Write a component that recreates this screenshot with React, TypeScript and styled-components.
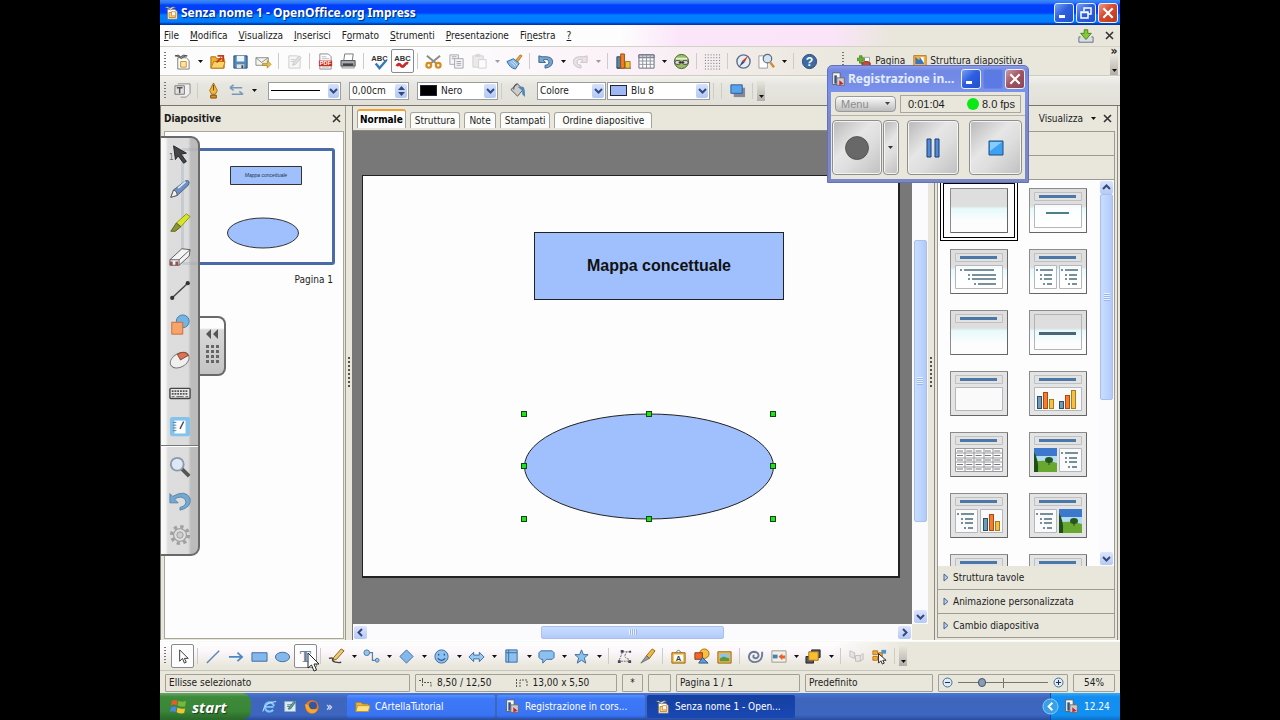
import React from "react";
import styled, { createGlobalStyle, css } from "styled-components";

const ui = `"DejaVu Sans Condensed", "DejaVu Sans", sans-serif`;
const beige = "#e9e7dc";

const Global = createGlobalStyle`
  *, *::before, *::after { box-sizing: border-box; }
  body { margin: 0; background: #000; }
  button, select, input { font: inherit; color: inherit; margin: 0; padding: 0; border: 0; background: none; border-radius: 0; }
  button { cursor: default; }
  svg { display: block; flex: none; }
`;

const Screen = styled.main`
  position: relative;
  width: 75%;
  height: 100vh;
  min-height: 600px;
  margin: 0 auto;
  display: flex;
  flex-direction: column;
  overflow: hidden;
  background: ${beige};
  color: #1c1c1c;
  font: 10px/14px ${ui};
  white-space: nowrap;
`;

/* ---------- title and menu ---------- */
const TitleBar = styled.header`
  height: 25px;
  flex: none;
  display: flex;
  align-items: center;
  padding: 0 2px 0 4px;
  gap: 2px;
  background: linear-gradient(#3c88f8 0, #2a72f6 3px, #0040fa 5px, #0040fa 13px, #0080ff 15px, #007cff 22px, #0038b0 24px);
`;
const Title = styled.h1`
  flex: 1;
  margin: 0;
  color: #fff;
  font: bold 12px/16px "Noto Sans", sans-serif;
  text-shadow: 1px 1px 1px #00207c;
`;
const WindowButton = styled.button<{ $tone?: "red" | "pale" | "dim" }>`
  width: 20px;
  height: 20px;
  display: grid;
  place-items: center;
  border: 1px solid ${(p) => (p.$tone === "dim" ? "#6a86e8" : "#e8f0ff")};
  border-radius: 3px;
  background: ${(p) =>
    p.$tone === "red"
      ? "linear-gradient(135deg, #ec9a84, #d8492c 45%, #b83a1c)"
      : p.$tone === "pale"
      ? "linear-gradient(135deg, #c89aa8, #a0525c 50%, #8c4658)"
      : p.$tone === "dim"
      ? "#5c7ae4"
      : "linear-gradient(135deg, #7aa0f4, #2e5fe0 45%, #2050cc)"};
`;
const MenuBar = styled.nav`
  height: 22px;
  flex: none;
  display: flex;
  align-items: center;
  gap: 11px;
  padding: 0 6px 0 4px;
  border-bottom: 1px solid #d4d2c8;
  background: linear-gradient(90deg, #fdfdfd 48%, #fbe6f9 54%, #fbe4f9 70%, ${beige} 76%);
`;
const MenuItem = styled.button`
  u { text-underline-offset: 1px; }
`;
const Spacer = styled.span`
  flex: 1;
`;

/* ---------- toolbars ---------- */
const Toolbar = styled.div<{ $kind: "main" | "line" | "draw" }>`
  display: flex;
  align-items: center;
  flex: none;
  padding-left: 4px;
  ${(p) =>
    p.$kind === "main" &&
    css`
      height: 29px;
      border-bottom: 1px solid #d0cec4;
      background: linear-gradient(90deg, #fcfcfc 30%, #fbf0f8 50%, #f0ebe6 62%, ${beige} 74%);
    `}
  ${(p) =>
    p.$kind === "line" &&
    css`
      height: 30px;
      border-bottom: 1px solid #77756e;
      background: linear-gradient(#f2f1ec 0, #e6e5df 9px, #e2e0d8 100%);
    `}
  ${(p) =>
    p.$kind === "draw" &&
    css`
      height: 30px;
      border-top: 1px solid #f8f8f4;
      border-bottom: 1px solid #c8c6bc;
      background: linear-gradient(90deg, transparent 70%, ${beige} 78%), linear-gradient(#fff 0, #fbf6fa 10px, ${beige} 24px);
    `}
`;
const Grip = styled.span`
  width: 2px;
  height: 18px;
  margin-right: 5px;
  background: repeating-linear-gradient(#77756c 0 1px, transparent 1px 3px);
`;
const Tool = styled.button<{ $on?: boolean }>`
  width: 23px;
  height: 24px;
  flex: none;
  display: grid;
  place-items: center;
  border: 1px solid ${(p) => (p.$on ? "#8a8a92" : "transparent")};
  border-radius: 2px;
  background: ${(p) => (p.$on ? "#fdfdfd" : "none")};
`;
const Drop = styled.button<{ $faded?: boolean }>`
  width: 12px;
  height: 20px;
  flex: none;
  display: grid;
  place-items: center;
  opacity: ${(p) => (p.$faded ? 0.4 : 1)};
`;
const Rule = styled.i`
  width: 1px;
  height: 16px;
  margin: 0 4px 0 3px;
  background: #cfccc8;
`;
const More = styled.button`
  width: 8px;
  height: 20px;
  display: grid;
  place-items: end center;
  padding-bottom: 3px;
  background: linear-gradient(${beige}, #b0aea8);
`;
const NamedTool = styled.button`
  display: flex;
  align-items: center;
  gap: 3px;
  margin-left: 8px;
`;
const ToolEnd = styled.span`
  display: flex;
  flex-direction: column;
  align-items: center;
  width: 12px;
  font-size: 12px;
  line-height: 8px;
  font-weight: bold;
`;
const Field = styled.label<{ $w: number; $gap?: number }>`
  width: ${(p) => p.$w}px;
  height: 18px;
  flex: none;
  display: flex;
  align-items: center;
  gap: 4px;
  padding: 0 1px 0 2px;
  margin-left: ${(p) => p.$gap ?? 8}px;
  border: 1px solid #9a9c9e;
  background: #fff;
  select, input { flex: 1; min-width: 0; width: 20px; height: 14px; line-height: 14px; appearance: none; outline: 0; }
`;
const FieldArrow = styled.span`
  width: 12px;
  height: 14px;
  display: grid;
  place-items: center;
  border-radius: 2px;
  background: linear-gradient(#d6e2fc, #b2c8f4);
`;
const Swatch = styled.span<{ $c: string }>`
  width: 17px;
  height: 11px;
  border: 1px solid #223;
  background: ${(p) => p.$c};
`;
const LineSample = styled.span`
  width: 53px;
  height: 1px;
  background: #000;
`;

/* ---------- workspace ---------- */
const Work = styled.div`
  flex: 1;
  min-height: 0;
  display: flex;
  border-bottom: 1px solid #fff;
`;
const SlidesPane = styled.aside`
  width: 186px;
  flex: none;
  display: flex;
  flex-direction: column;
  padding: 0 1px 1px 3px;
  border-left: 1px solid #777;
  border-right: 1px solid #9c9a90;
`;
const PaneHead = styled.div`
  height: 25px;
  flex: none;
  display: flex;
  align-items: center;
  gap: 4px;
  padding: 0 3px 0 0;
  h2 { flex: 1; margin: 0; font: bold 10px/14px ${ui}; }
`;
const SlideList = styled.div`
  flex: 1;
  padding: 16px 8px 0 6px;
  border: 1px solid #a9a79c;
  background: #fdfdfd;
`;
const ThumbRow = styled.div`
  display: flex;
  justify-content: space-between;
  align-items: flex-start;
`;
const Thumb = styled.div`
  width: 154px;
  height: 117px;
  border: 3px solid #4a6aa8;
  border-radius: 3px;
  background: #fdfdfd;
`;
const ThumbName = styled.p`
  margin: 8px 2px 0;
  text-align: right;
`;
const Splitter = styled.div`
  width: 6px;
  flex: none;
  display: grid;
  place-items: center;
  span { width: 2px; height: 31px; margin-bottom: 2px; background: repeating-linear-gradient(#55534c 0 2px, transparent 2px 4px); }
`;
const Editor = styled.section`
  flex: 1;
  min-width: 0;
  display: flex;
  flex-direction: column;
  border-left: 1px solid #777;
`;
const Tabs = styled.div`
  height: 25px;
  flex: none;
  display: flex;
  align-items: flex-end;
  gap: 4px;
  padding: 0 4px 2px;
  border-bottom: 1px solid #8c8a84;
`;
const Tab = styled.button<{ $active?: boolean }>`
  height: ${(p) => (p.$active ? 19 : 16)}px;
  padding: 0 ${(p) => (p.$active ? 2 : 4)}px;
  border: 1px solid #a4a29a;
  border-bottom: 0;
  border-top: ${(p) => (p.$active ? "2px solid #f4a030" : "1px solid #a4a29a")};
  border-radius: 3px 3px 0 0;
  background: #fcfcfa;
  font-weight: ${(p) => (p.$active ? "bold" : "normal")};
  color: ${(p) => (p.$active ? "#000" : "#1c1c1c")};
  &:last-child { padding: 0 7px; }
`;
const Stage = styled.div`
  flex: 1;
  min-height: 0;
  display: grid;
  grid-template: minmax(0, 1fr) 16px / minmax(0, 1fr) 16px;
`;
const Desk = styled.div`
  padding: 44px 12px 46px 9px;
  background: #787878;
`;
const Slide = styled.div`
  position: relative;
  height: 100%;
  border: 1px solid #222;
  border-width: 1px 2px 2px 1px;
  background: #fdfdfd;
`;
const Concept = styled.div`
  position: absolute;
  left: 171px;
  top: 56px;
  width: 250px;
  height: 68px;
  display: grid;
  place-items: center;
  border: 1px solid #222;
  background: #9fc0fd;
  color: #111;
  font: bold 16px/20px "Liberation Sans", sans-serif;
`;
const Oval = styled.svg`
  position: absolute;
  left: 157px;
  top: 234px;
`;
const Scroll = styled.div<{ $across?: boolean }>`
  display: flex;
  flex-direction: ${(p) => (p.$across ? "row" : "column")};
  align-items: center;
  background: #fbfbfd;
  padding: 1px;
`;
const ScrollButton = styled.button`
  width: 13px;
  height: 13px;
  flex: none;
  display: grid;
  place-items: center;
  border-radius: 2px;
  background: linear-gradient(#dbe5fd, #b6c9f4);
`;
const ScrollGap = styled.span<{ $n: number }>`
  flex: ${(p) => p.$n} 1 0;
`;
const ScrollThumb = styled.span<{ $n: number; $across?: boolean }>`
  flex: ${(p) => p.$n} 1 0;
  ${(p) => (p.$across ? "height" : "width")}: 13px;
  display: grid;
  place-items: center;
  border: 1px solid #a8c0ee;
  border-radius: 2px;
  background: linear-gradient(${(p) => (p.$across ? "180deg" : "90deg")}, #c8dcfe, #bbd4fd 60%, #b4c8f8);
  i {
    width: ${(p) => (p.$across ? 8 : 6)}px;
    height: ${(p) => (p.$across ? 6 : 8)}px;
    background: repeating-linear-gradient(${(p) => (p.$across ? "90deg" : "180deg")}, #e6f2ff 0 1px, #9ab8ee 1px 2px);
  }
`;

/* ---------- task pane ---------- */
const TaskPane = styled.aside`
  width: 184px;
  flex: none;
  display: flex;
  flex-direction: column;
  margin-right: 2px;
  padding: 0 2px 2px;
  border-left: 1px solid #8c8a82;
  border-right: 1px solid #8c8a82;
`;
const Sections = styled.div`
  flex: 1;
  min-height: 0;
  display: flex;
  flex-direction: column;
  border: 1px solid #9c9a92;
`;
const Section = styled.button`
  height: 24px;
  flex: none;
  display: flex;
  align-items: center;
  gap: 4px;
  padding-left: 5px;
  text-align: left;
  border-bottom: 1px solid #9c9a92;
  &:last-child { border-bottom: 0; height: 23px; }
`;
const LayoutArea = styled.div`
  flex: 1;
  min-height: 0;
  display: flex;
  background: #fdfdfd;
`;
const LayoutGrid = styled.div`
  flex: 1;
  height: 100%;
  overflow: hidden;
  display: grid;
  grid-template-columns: 79px 79px;
  grid-auto-rows: 61px;
  padding-left: 2px;
`;
const LayoutOption = styled.button<{ $on?: boolean }>`
  width: 78px;
  height: 61px;
  display: grid;
  place-items: center;
  border: ${(p) => (p.$on ? "4px double #000" : "4px solid transparent")};
`;

/* ---------- status bar ---------- */
const Status = styled.footer`
  height: 22px;
  flex: none;
  display: flex;
  align-items: center;
  gap: 5px;
  padding: 1px 5px 0;
`;
const Cell = styled.div<{ $w?: number; $center?: boolean }>`
  ${(p) => (p.$w ? `width: ${p.$w}px;` : "flex: 1;")}
  height: 18px;
  display: flex;
  align-items: center;
  justify-content: ${(p) => (p.$center ? "center" : "flex-start")};
  gap: 5px;
  padding: 0 3px;
  border: 1px solid #a2a096;
  border-radius: 1px;
`;
const Position = styled.span`
  display: flex;
  align-items: center;
  gap: 5px;
  margin-right: 18px;
`;
const Zoom = styled.input`
  appearance: none;
  flex: 1;
  min-width: 0;
  height: 10px;
  outline: 0;
  background: linear-gradient(#77756e, #77756e) center / 100% 1px no-repeat, linear-gradient(#77756e, #77756e) center / 1px 10px no-repeat !important;
  &::-webkit-slider-thumb { appearance: none; width: 8px; height: 9px; border-radius: 4px; border: 1px solid #44546c; background: #8a9cb4; }
`;

/* ---------- taskbar ---------- */
const Taskbar = styled.nav`
  height: 27px;
  flex: none;
  display: flex;
  align-items: stretch;
  color: #fff;
  background: linear-gradient(#4878dc 0, #3f66bc 5px, #3d66c0 22px, #2a4c9c 27px);
`;
const Start = styled.button`
  width: 91px;
  display: flex;
  align-items: center;
  gap: 5px;
  padding-left: 10px;
  border-radius: 0 9px 9px 0;
  background: linear-gradient(#6aa866 0, #3c8a3a 4px, #3a8638 18px, #2a6a2a 26px);
  font: italic bold 15px/18px "Open Sans", sans-serif;
  text-shadow: 1px 1px 1px #1c3c1c;
`;
const Quick = styled.div`
  width: 95px;
  display: flex;
  align-items: center;
  gap: 6px;
  padding-left: 11px;
  font-size: 12px;
`;
const Task = styled.button<{ $active?: boolean }>`
  width: 148px;
  height: 23px;
  margin: 2px 1px 0;
  display: flex;
  align-items: center;
  gap: 5px;
  padding-left: 8px;
  border-radius: 2px;
  background: ${(p) => (p.$active ? "linear-gradient(#1440a0, #1a48b4)" : "linear-gradient(#5a90ff 0, #3c78f8 4px, #3a74f2 20px, #2c60d4)")};
`;
const Tray = styled.div`
  width: 70px;
  display: flex;
  align-items: center;
  gap: 5px;
  background: linear-gradient(#38a8f8 0, #128ef0 4px, #1290f2 22px, #0c70c8);
  border-left: 1px solid #0c50a8;
  svg:first-child { margin-left: -9px; }
`;

/* ---------- floating recorder ---------- */
const Recorder = styled.section`
  position: absolute;
  right: 91px;
  top: 65px;
  width: 202px;
  padding: 0 3px 3px;
  border-radius: 5px 5px 0 0;
  background: linear-gradient(#8a9ce8 0, #7088e4 5px, #7a92ea 25px, #7a88c8 60px);
  border: 1px solid #6470b8;
`;
const RecTitle = styled.div`
  height: 26px;
  display: flex;
  align-items: center;
  gap: 2px;
  h2 { flex: 1; margin: 0; color: #e4ecff; font: bold 12px/16px "Noto Sans", sans-serif; }
`;
const RecInfo = styled.div`
  height: 24px;
  display: flex;
  align-items: center;
  gap: 4px;
  padding: 2px 4px;
  border-bottom: 1px solid #b4b2aa;
  background: ${beige};
  font: 11px/14px "Liberation Sans", sans-serif;
`;
const RecMenu = styled.button`
  width: 61px;
  height: 16px;
  display: flex;
  align-items: center;
  justify-content: space-between;
  padding: 0 5px;
  border: 1px solid #9a9a9a;
  border-radius: 4px;
  background: linear-gradient(#fafafa, #bdbdbd);
  color: #8c8c8c;
`;
const RecStats = styled.div`
  flex: 1;
  height: 18px;
  display: flex;
  align-items: center;
  padding: 0 5px 0 7px;
  border: 1px solid #a8a69e;
  i { width: 12px; height: 12px; margin: 0 3px 0 auto; border-radius: 50%; background: #0ce814; }
`;
const RecButtons = styled.div`
  height: 63px;
  display: flex;
  align-items: center;
  padding: 0 3px 0 1px;
  background: ${beige};
`;
const RecButton = styled.button<{ $w: number; $gap?: number }>`
  width: ${(p) => p.$w}px;
  height: 55px;
  margin-left: ${(p) => p.$gap ?? 0}px;
  display: grid;
  place-items: center;
  border: 1px solid #8e8e8e;
  border-radius: 4px;
  box-shadow: inset 0 0 0 1px #f4f4f4;
  background: linear-gradient(135deg, #b8b8b8, #e6e6e6 40%, #dedede 60%, #c0c0c0);
`;

/* ---------- floating pen palette ---------- */
const Palette = styled.div`
  position: absolute;
  left: 0;
  top: 136px;
  width: 40px;
  height: 420px;
  display: flex;
  flex-direction: column;
  align-items: center;
  border: 2px solid #6a6a6a;
  border-left-width: 1px;
  border-radius: 0 9px 9px 0;
  background: linear-gradient(90deg, rgba(250, 250, 250, 0.95) 4px, rgba(216, 216, 216, 0.88) 7px, rgba(216, 216, 216, 0.88) 27px, rgba(184, 184, 184, 0.95) 30px);
`;
const PaletteTool = styled.button`
  width: 34px;
  height: 34px;
  flex: none;
  display: grid;
  place-items: center;
`;
const PaletteRule = styled.i`
  width: 100%;
  height: 2px;
  margin: 1px 0 3px;
  flex: none;
  background: linear-gradient(#777 50%, #fff 50%);
`;
const PaletteHandle = styled.button`
  position: absolute;
  left: 40px;
  top: 316px;
  width: 26px;
  height: 60px;
  display: grid;
  place-items: center;
  border: 2px solid #6a6a6a;
  border-left: 0;
  border-radius: 0 8px 8px 0;
  background: linear-gradient(#fdfdfd 10px, #d8d8d8 12px, #c4c4c4);
`;
const Pointer = styled.svg`
  position: absolute;
  left: 147px;
  bottom: 48px;
  pointer-events: none;
`;

/* ---------- icons ---------- */
const sans = "Liberation Sans, sans-serif";
const art: Record<string, React.ReactNode> = {
  impress: (<><path d="M4 5h9l3 3v9H4z" fill="#fff" stroke="#666" /><path d="M1 3q4-2 6 1 3-3 7-1-4 0-6 3-3-3-7-3z" fill="#eee" stroke="#555" strokeWidth=".6" /><path d="M6 9h8v6H6z" fill="#f4d48c" stroke="#c08020" /><path d="M9 8h5v5H9z" fill="#fff" stroke="#e08820" /></>),
  create: (<><path d="M4 5h9l3 3v9H4z" fill="#fff" stroke="#777" /><path d="M1 3q4-2 6 1 3-3 7-1-4 0-6 3-3-3-7-3z" fill="#999" stroke="#444" strokeWidth=".9" /><path d="M7 9h6v6H7z" fill="#fae4a8" stroke="#d09020" /></>),
  open: (<><path d="M2 4h5l1 2h8v10H2z" fill="#f0b030" stroke="#a86c10" /><path d="M2 16l3-7h12l-2 7z" fill="#fbd468" stroke="#b87c18" /><path d="M8 10l5-5M9 3h6v6" stroke="#c83c18" strokeWidth="2" fill="none" /></>),
  save: (<><path d="M2 3h14v13H2z" fill="#5488b8" stroke="#244c78" /><path d="M5 3h8v6H5z" fill="#f0f4f8" /><path d="M5 12h8v4H5z" fill="#dce4e8" /><path d="M10 13h2v3h-2z" fill="#345" /></>),
  mail: (<><path d="M1 5h13v8H1z" fill="#f6f6f0" stroke="#888" /><path d="M1 5l6 5 7-5" fill="none" stroke="#888" /><path d="M8 11h5V8l4 4-4 4v-3H8z" fill="#f0c040" stroke="#a07818" strokeWidth=".7" /></>),
  edit: (<g opacity=".4"><path d="M3 3h9l3 3v10H3z" fill="#eee" stroke="#888" /><path d="M7 13l1-3 6-7 2 2-6 7z" fill="#bbb" stroke="#777" /><path d="M5 7h5M5 9h4" stroke="#888" /></g>),
  pdf: (<><path d="M3 1h9l3 3v13H3z" fill="#fff" stroke="#888" /><path d="M5 4h5M5 6h8M5 15h8" stroke="#bbb" /><path d="M2 8h14v6H2z" fill="#cc2c20" /><text x="9" y="13" textAnchor="middle" fontSize="6" fontWeight="bold" fontFamily={sans} fill="#fff">PDF</text></>),
  print: (<><path d="M5 1h9l-1 7H4z" fill="#fff" stroke="#777" /><path d="M1 8h15v6H1z" fill="#a8acb0" stroke="#4c5054" /><path d="M3 11h11v3H3z" fill="#3c4448" /><path d="M3 14h12v2H2z" fill="#d8d8d4" stroke="#777" strokeWidth=".6" /></>),
  spell: (<><text x="9" y="8" textAnchor="middle" fontSize="8" fontWeight="bold" fontFamily={sans} fill="#333">ABC</text><path d="M5 11l4 5 7-8" stroke="#3878b8" strokeWidth="2.500" fill="none" /></>),
  auto: (<><text x="9" y="8" textAnchor="middle" fontSize="8" fontWeight="bold" fontFamily={sans} fill="#333">ABC</text><path d="M3 14q2-4 4-1t4 0 4-2" stroke="#cc2828" strokeWidth="3" fill="none" /></>),
  cut: (<><path d="M2 3l11 9M16 3L5 12" stroke="#8a8a88" strokeWidth="2" /><circle cx="4" cy="13" r="2.500" fill="none" stroke="#d88c20" strokeWidth="2.400" /><circle cx="14" cy="13" r="2.500" fill="none" stroke="#d88c20" strokeWidth="2.400" /></>),
  copy: (<g opacity=".65"><path d="M2 2h9v10H2z" fill="#f4f4f4" stroke="#778" /><path d="M7 6h9v10H7z" fill="#f4f4f4" stroke="#778" /><path d="M4 4h5M4 6h3M9 9h5M9 11h5M9 13h5" stroke="#778" /></g>),
  paste: (<g opacity=".35"><path d="M2 3h11v12H2z" fill="#ccc" stroke="#888" /><path d="M5 1h5v3H5z" fill="#999" /><path d="M8 7h8v9H8z" fill="#fff" stroke="#888" /></g>),
  brush: (<><path d="M10 8l5-6 2 1-5 7z" fill="#e8a838" stroke="#8c5c10" strokeWidth=".7" /><path d="M1 9l7-3 6 5-4 6q-6-1-9-8z" fill="#88b8e4" stroke="#34689c" /><path d="M5 9l5 5M7 8l5 5" stroke="#d4e8f8" /></>),
  undo: (<path d="M2 3v7h7L6.500 7.500q5-2 6 1.500t-4 4v3q8-1 8-7t-11-5z" fill="#78a8d0" stroke="#34648c" />),
  redo: (<g opacity=".3"><path d="M16 3v7H9l2.500-2.500q-5-2-6 1.500t4 4v3q-8-1-8-7t11-5z" fill="#bbb" stroke="#555" /></g>),
  chart: (<><path d="M2 4h4v12H2zM2 16h15" fill="#5888a8" stroke="#345" /><path d="M6 1h4v15H6z" fill="#f08028" stroke="#a04c08" /><path d="M11 9h5v7h-5z" fill="#f4c040" stroke="#a07818" /></>),
  table: (<><path d="M1 2h16v14H1z" fill="#fff" stroke="#667" /><path d="M1 2h16v3H1z" fill="#c8d0d8" stroke="#667" /><path d="M1 8.500h16M1 12h16M5 2v14M9 2v14M13 2v14" stroke="#8890a0" /></>),
  globe: (<><circle cx="9" cy="9" r="7.500" fill="#98bc60" stroke="#446030" /><path d="M3 6h12" stroke="#e8f0d0" strokeWidth="2" /><rect x="2" y="8" width="6" height="4" rx="2" fill="#ddd" stroke="#444" /><rect x="10" y="8" width="6" height="4" rx="2" fill="#ddd" stroke="#444" /><path d="M6 10h6" stroke="#333" strokeWidth="1.500" /></>),
  grid: (<path d="M1 2h17M1 5h17M1 8h17M1 11h17M1 14h17M1 17h17" stroke="#667" strokeDasharray="1 2" />),
  compass: (<><circle cx="9" cy="9" r="7" fill="#e4ecf4" stroke="#607088" strokeWidth="1.500" /><path d="M14 3l-4 7-2-2z" fill="#d83020" /><path d="M4 15l4-7 2 2z" fill="#304c80" /></>),
  find: (<><path d="M1 3h9v13H1z" fill="#fff" stroke="#999" /><circle cx="10" cy="6" r="4.500" fill="#cfe4f4" stroke="#667" strokeWidth="1.300" /><path d="M13 10l4 5" stroke="#c89030" strokeWidth="2.500" /></>),
  help: (<><circle cx="9" cy="9" r="7.500" fill="#3c6ca4" stroke="#24487c" /><text x="9" y="13.500" textAnchor="middle" fontSize="13" fontWeight="bold" fontFamily={sans} fill="#fff">?</text></>),
  page: (<><path d="M6 4h9v12H6z" fill="#fff" stroke="#999" /><path d="M3 2h3v3h3v3H6v3H3V8H0V5h3z" fill="#68b030" stroke="#386c14" strokeWidth=".7" /><ellipse cx="11" cy="12" rx="5" ry="3" fill="#c84c30" stroke="#6c2010" /></>),
  design: (<><path d="M1 2h16v14H1z" fill="#f4b040" stroke="#b07010" /><path d="M3 4l5 4 1-4 5 0v9H3z" fill="#3c74b8" /><path d="M9 4h5v8z" fill="#fff" /></>),
  styles: (<><path d="M4 2h13v10l-4 4H7" fill="#f0f0f0" stroke="#888" /><path d="M1 4h10v9H1z" fill="#e0e0e0" stroke="#777" /><path d="M3 6h6M6 6v6" stroke="#555" strokeWidth="1.500" /></>),
  nib: (<><path d="M9 1l4 8-2 4H7L5 9z" fill="#f4b83c" stroke="#a06c10" /><path d="M9 3v6" stroke="#6c4408" /><path d="M6 14h6v3H6z" fill="#e09020" stroke="#7c4c08" /></>),
  ends: (<path d="M2 6h13M2 6l4-3M2 6l4 3M4 13h12M16 13l-4-3" stroke="#7898b8" strokeWidth="1.600" fill="none" />),
  bucket: (<><path d="M2 8l7-6 6 6-6 7z" fill="#ccc" stroke="#555" /><path d="M5 8q0-6 4-6" fill="none" stroke="#444" /><path d="M9 5h6q2 1 2 11l-3-3V9z" fill="#4c88b8" /></>),
  shadow: (<><path d="M5 6h12v10H5z" fill="#889" /><path d="M2 3h12v9H2z" fill="#58a4ec" stroke="#2c5c94" /></>),
  select: (<path d="M6 2v12l3-3 2 5 2-1-2-4h4z" fill="#fff" stroke="#333" />),
  line: (<path d="M2 16L15 3" stroke="#5888b8" strokeWidth="1.500" />),
  arrow: (<path d="M1 9.500h13M10 5l5 4.500-5 4.500" stroke="#4c88c4" strokeWidth="1.800" fill="none" />),
  rect: (<path d="M1 5h16v9H1z" fill="#84b8ec" stroke="#3c6c9c" />),
  ellipse: (<ellipse cx="9" cy="9.500" rx="7.500" ry="5" fill="#84b8ec" stroke="#3c6c9c" />),
  text: (<text x="9" y="15" textAnchor="middle" fontSize="18" fontWeight="bold" fontFamily="Liberation Serif, serif" fill="#68849c">T</text>),
  pencil: (<><path d="M6 10L14 1l3 2-8 9-4 1z" fill="#f0c870" stroke="#84601c" /><path d="M1 11q5-1 4 1t3 3 6 0" stroke="#444" strokeWidth="1.500" fill="none" /></>),
  connector: (<><path d="M5 5h5v8h4" fill="none" stroke="#5c80a0" strokeWidth="1.300" /><circle cx="4" cy="5" r="3" fill="#98c4ec" stroke="#4478a8" /><circle cx="15" cy="13" r="2" fill="#98c4ec" stroke="#4478a8" /></>),
  diamond: (<path d="M9 2l7 7-7 7-7-7z" fill="#84b8ec" stroke="#3c6c9c" />),
  smile: (<><circle cx="9" cy="9" r="7" fill="#8cc0f0" stroke="#3c6c9c" /><path d="M6 6v2M12 6v2M5 11q4 4 8 0" stroke="#245080" fill="none" strokeWidth="1.300" /></>),
  both: (<path d="M1 9.500l5-5v3h6v-3l5 5-5 5v-3H6v3z" fill="#98c8f4" stroke="#3c6c9c" />),
  flow: (<><path d="M3 2h12v13H3z" fill="#8cc0f0" stroke="#3c6c9c" /><path d="M6 2v13M3 5h12" stroke="#3c6c9c" /></>),
  callout: (<path d="M3 3h12l2 2v5l-2 2H9l-4 4v-4H3l-2-2V5z" fill="#8cc0f0" stroke="#3c6c9c" />),
  star: (<path d="M9 2l2 5h5l-4 3.500 1.500 5.500L9 13l-4.500 3L6 10.500 2 7h5z" fill="#8cc0f0" stroke="#3c6c9c" />),
  points: (<><path d="M15 4H7L3 14h12M12 4q-6 6 2 8" stroke="#666" fill="none" strokeDasharray="2 1" /><path d="M5 2h3v3H5zM14 3h2v2h-2zM2 13h3v3H2zM13 13h3v3h-3z" fill="#446" /></>),
  glue: (<><path d="M8 8l6-7 3 2-6 8z" fill="#f0b840" stroke="#94681c" /><path d="M2 16l6-8 3 3z" fill="#999" stroke="#555" strokeWidth=".7" /></>),
  fontwork: (<><path d="M2 5h14v11H2z" fill="#f4b83c" stroke="#94641c" /><path d="M4 7h10v7H4z" fill="#fff" /><path d="M6 5l3-3 3 3" fill="none" stroke="#666" /><text x="9" y="14" textAnchor="middle" fontSize="8" fontWeight="bold" fontFamily={sans} fill="#246">A</text></>),
  shapes: (<><circle cx="12" cy="6" r="5" fill="#f8c040" stroke="#a07010" /><path d="M2 5h8v7H2z" fill="#e86830" stroke="#943c10" /><path d="M6 16l4-6 6 6z" fill="#5c9cd8" stroke="#2c5c8c" /></>),
  gallery: (<><path d="M2 4h14v12H2z" fill="#f4b83c" stroke="#94641c" /><path d="M4 6h10v8H4z" fill="#8cc4f0" /><path d="M4 11l4-2 6 2v3H4z" fill="#5c9838" /></>),
  spiral: (<path d="M16 4q1 10-7 11-7 0-7-6 1-5 6-5 5 1 4 5-2 3-5 1-1-2 1-2" stroke="#6c7c94" strokeWidth="2" fill="none" />),
  align: (<><path d="M2 3h15v12H2z" fill="#f0f0e8" stroke="#998" /><path d="M3 7h5v4H3z" fill="#3c84b8" /><path d="M9 9l4-3v2h3v3h-3v2z" fill="#e86030" /></>),
  arrange: (<><path d="M7 2h9v8H7zM1 9h8v7H1z" fill="#556" stroke="#223" /><path d="M4 4h10v9H4z" fill="#f8c030" stroke="#a07410" /></>),
  extrude: (<g opacity=".35"><path d="M2 3l5 2v6l-5-2z" fill="#ccc" stroke="#666" /><path d="M8 8h5v6H8zM13 8l3-2v6l-3 2" fill="#ddd" stroke="#666" /></g>),
  interact: (<><path d="M2 3h5v4H2zM2 9h5v4H2zM8 5h4v4H8z" fill="#f4a838" stroke="#b87818" /><path d="M11 2h5v4h-5z" fill="#4c94cc" /><path d="M8 6v10l2.500-2.500L12 17l2-1-1.500-3H16z" fill="#fff" stroke="#222" /></>),
  download: (<><path d="M3 10H1v6h16v-6h-2" fill="#d8dce4" stroke="#667" /><path d="M7 2h4v4h4l-6 7-6-7h4z" fill="#84c83c" stroke="#407c14" /></>),
  recorder: (<><path d="M2 1h9v14H2z" fill="#f6f6f6" stroke="#555" /><path d="M4 4h3v10H4z" fill="#345088" /><path d="M7 7h9v9H7z" fill="#ccc" stroke="#666" /><path d="M10 10l5 4-5 2z" fill="#cc2030" /></>),
  flag: (<><path d="M2 3q4-2 6 0L7 8q-3-2-6 0z" fill="#e85c28" /><path d="M9 3q4 2 8 0l-1 6q-4 1-8-1z" fill="#74b83c" /><path d="M1 10q3-2 6 0l-1 5q-3-2-6 0z" fill="#4888e8" /><path d="M8 10q4 2 8 1l-1 5q-4 1-8-1z" fill="#f4c430" /></>),
  ie: (<><circle cx="9" cy="9.500" r="5.500" fill="none" stroke="#7cc4f8" strokeWidth="2.600" strokeDasharray="29 6" transform="rotate(38 9 9.500)" /><path d="M4 9.500h10" stroke="#7cc4f8" strokeWidth="2.200" /><path d="M1 15Q3 4 17 3" stroke="#c4e6fc" strokeWidth="1.200" fill="none" /></>),
  desktop: (<><path d="M2 3h13v12H2z" fill="#dceaf4" stroke="#8cb0c8" /><path d="M6 12l7-9 2 1-6 8zM5 7h5M5 9h3" stroke="#3c6c6c" fill="#68a0a0" /></>),
  fox: (<><circle cx="9" cy="9" r="7.500" fill="#e87818" /><circle cx="10" cy="7.500" r="4.500" fill="#3454a4" /><path d="M1 6q4-1 5 3t9 2q-2 6-7 5T1 6z" fill="#f8a828" /></>),
  folder: (<><path d="M1 4h6l2 2h7v9H1z" fill="#e8b43c" stroke="#a87818" /><path d="M1 15l2-7h15l-2 7z" fill="#fce084" stroke="#c09028" /></>),
  trayBack: (<><circle cx="9" cy="9" r="8" fill="#38a0e8" stroke="#90d0fc" /><path d="M11 5L7 9l4 4" stroke="#fff" strokeWidth="2" fill="none" /></>),
};
const Icon = ({ n, s = 17 }: { n: string; s?: number }) => (
  <svg width={s} height={s} viewBox="0 0 18 18" aria-hidden>{art[n]}</svg>
);
const Tri = ({ c = "#111" }: { c?: string }) => (
  <svg width="5" height="3" viewBox="0 0 5 3"><path d="M0 0h5L2.500 3z" fill={c} /></svg>
);
const Chevron = ({ d = "down" }: { d?: "down" | "up" | "left" | "right" }) => {
  const turn = { down: 0, left: 90, up: 180, right: 270 }[d];
  return (
    <svg width="9" height="9" viewBox="0 0 9 9">
      <path d="M1 3l3.500 3.500L8 3" transform={`rotate(${turn} 4.500 4.500)`} stroke="#34487c" strokeWidth="2" fill="none" />
    </svg>
  );
};
const Cross = ({ c = "#333", s = 9 }: { c?: string; s?: number }) => (
  <svg width={s} height={s} viewBox="0 0 9 9"><path d="M1 1l7 7M8 1L1 8" stroke={c} strokeWidth="1.600" /></svg>
);
const MinMark = () => (<svg width="12" height="12" viewBox="0 0 12 12"><path d="M1 8h6v3H1z" fill="#fff" /></svg>);

/* "|" is a rule, "v" a drop-down arrow, "~" a faded one; a trailing "!" marks a pressed tool. */
const Tools = ({ items }: { items: string[] }) => (
  <>
    {items.map((it, i) => {
      if (it === "|") return <Rule key={i} />;
      if (it === "v" || it === "~") return <Drop key={i} $faded={it === "~"} aria-label="Opzioni"><Tri /></Drop>;
      const n = it.replace("!", "");
      return <Tool key={i} $on={it.endsWith("!")} aria-label={n}><Icon n={n} /></Tool>;
    })}
  </>
);

const mainItems = "create v open save mail | edit | pdf print | spell auto! | cut copy paste ~ brush | undo v redo ~ | chart table v globe | grid | compass find v | help".split(" ");
const drawItems = "select! | line arrow rect ellipse text! | pencil v connector v diamond v smile v both v flow v callout v star v | points glue | fontwork shapes gallery | spiral align v arrange v | extrude interact".split(" ");

const menus: [string, string, string][] = [
  ["", "F", "ile"], ["", "M", "odifica"], ["", "V", "isualizza"], ["", "I", "nserisci"], ["F", "o", "rmato"],
  ["", "S", "trumenti"], ["", "P", "resentazione"], ["Fi", "n", "estra"], ["", "?", ""],
];

/* ---------- slide layout previews ---------- */
const Heading = () => (<><path d="M5.500 4.500h47v8h-47z" fill="#e2e2e2" stroke="#c0c0c0" /><path d="M10 7h37v3H10z" fill="#4c78a8" /></>);
const Frame = ({ x, w }: { x: number; w: number }) => <path d={`M${x + 0.5} 16.500h${w}v23h-${w}z`} fill="#fff" fillOpacity=".8" stroke="#b4b8bc" />;
const Bullets = ({ x, wide }: { x: number; wide?: boolean }) => {
  const k = wide ? 2 : 1;
  return (
    <g stroke="#4c6c78" strokeWidth="1.300">
      <path d={`M${x} 21h2M${x + 4} 21h${wide ? 30 : 13}`} />
      <path d={`M${x + 4 * k} 26h2M${x + 4 * k + 4} 26h${wide ? 24 : 8}M${x + 4 * k} 30h2M${x + 4 * k + 4} 30h${wide ? 24 : 8}`} />
      <path d={`M${x + 7 * k} 35h2M${x + 7 * k + 4} 35h${wide ? 18 : 5}`} />
    </g>
  );
};
const Bars = ({ x, h }: { x: number; h: number[] }) => (
  <>{h.map((v, i) => <rect key={i} x={x + i * 6 + 0.5} y={37.5 - v} width="4" height={v} fill={["#6c9cb8", "#f08030", "#f4c048"][i % 3]} stroke={["#2c5068", "#b04810", "#a87c18"][i % 3]} />)}</>
);
const Photo = ({ x }: { x: number }) => (
  <g transform={`translate(${x} 16)`}><path d="M0 0h23v24H0z" fill="#3c78cc" /><path d="M0 8h23v8H0z" fill="#b4dcf4" /><path d="M0 14q10-3 23 1v9H0z" fill="#68a830" /><path d="M0 4q5 8 4 20H0z" fill="#1c5018" /><ellipse cx="15" cy="12" rx="4" ry="3" fill="#245820" /><path d="M15 13v4" stroke="#342" /></g>
);
const previews: React.ReactNode[] = [
  null,
  <><Heading /><Frame x={5} w={47} /><path d="M17 25h23" stroke="#4c8088" strokeWidth="2" /></>,
  <><Heading /><Frame x={5} w={47} /><Bullets x={10} wide /></>,
  <><Heading /><Frame x={5} w={22} /><Frame x={30} w={22} /><Bullets x={7} /><Bullets x={32} /></>,
  <Heading />,
  <><path d="M5.500 4.500h47v35h-47z" fill="none" stroke="#b4b4b4" /><path d="M10 22h37v3H10z" fill="#4c6478" /></>,
  <><Heading /><Frame x={5} w={47} /></>,
  <><Heading /><Frame x={5} w={47} /><Bars x={8} h={[12, 16, 9]} /><Bars x={30} h={[7, 13, 18]} /></>,
  <><Heading /><path d="M5.500 16.500h47v23h-47z" fill="#fff" /><path d="M5.500 16.500h47v23h-47zM5 21h47M5 26h47M5 30h47M5 35h47M15 17v22M24 17v22M34 17v22M43 17v22" fill="none" stroke="#999" /><path d="M7 19h45M7 23.500h45M7 28h45M7 32.500h45M7 37h45" stroke="#778" strokeDasharray="6 3.300" /></>,
  <><Heading /><Photo x={5} /><Frame x={30} w={22} /><Bullets x={32} /></>,
  <><Heading /><Frame x={5} w={22} /><Frame x={30} w={22} /><Bullets x={7} /><Bars x={33} h={[12, 16, 9]} /></>,
  <><Heading /><Frame x={5} w={22} /><Bullets x={7} /><Photo x={30} /></>,
  <Heading />,
  <Heading />,
];

/* ---------- pen palette drawings, 24 by 24 ---------- */
const pens: React.ReactNode[] = [
  <><text x="0" y="17" fontSize="9" fill="#666">1</text><path d="M5 2l14 8-6 1 6 8-3 2-6-8-3 4z" fill="#444" stroke="#222" /></>,
  <><path d="M2 21l3-8L18 3q6-1 3 5L9 19z" fill="#6c90c4" stroke="#4c6078" /><path d="M2 21l3-8q4 1 4 6z" fill="#f0f0f0" stroke="#555" /><path d="M10 11l8-7" stroke="#dce8f8" strokeWidth="2" /></>,
  <><path d="M8 12L19 2l4 3-10 11z" fill="#d8e428" stroke="#84901c" /><path d="M2 21l6-9 5 4-6 5z" fill="#8c9434" stroke="#556018" /></>,
  <><path d="M1 15L14 3l9 1-1 7-11 10H1z" fill="#f4f4f4" stroke="#555" /><path d="M1 15h10v6M11 15L23 4" fill="none" stroke="#555" /><path d="M1 17h3v4H1zM7 17h3v4H7z" fill="#a04c58" /></>,
  <><path d="M3 20L21 3" stroke="#444" strokeWidth="1.500" /><circle cx="3.500" cy="19.500" r="2.300" fill="#333" /><circle cx="20.500" cy="3.500" r="2.300" fill="#333" /></>,
  <><circle cx="15" cy="8" r="7" fill="#74b4e4" stroke="#3c7cac" /><path d="M3 9h12v13H3z" fill="#f8a468" stroke="#c8683c" /></>,
  <g transform="rotate(-30 12 12)"><ellipse cx="11" cy="13" rx="11" ry="7.500" fill="#f0f0f0" stroke="#777" /><path d="M12 13V6q10 0 10 7z" fill="#dc7454" stroke="#8c4c3c" /></g>,
  <><rect x="1" y="7" width="22" height="11" rx="1" fill="#e8e8e8" stroke="#444" strokeWidth="1.500" /><path d="M3 10h18M3 13h18" stroke="#555" strokeWidth="2" strokeDasharray="2 1" /><path d="M3 16h3M8 16h8M18 16h3" stroke="#555" /></>,
  <><rect x="1" y="1" width="22" height="21" rx="3" fill="#84c4ec" /><path d="M6 5h12v14H6z" fill="#fff" /><path d="M4 7h4M4 10h4M4 13h4M4 16h4" stroke="#557c98" /><path d="M12 14l4-8" stroke="#446" strokeWidth="1.500" /></>,
  <><path d="M14 14l8 8" stroke="#555" strokeWidth="4" /><circle cx="9" cy="9" r="7" fill="#dce8f4" stroke="#8c98ac" strokeWidth="2" /></>,
  <path d="M1 4v10h9L6 10q8-5 12 1 2 6-6 8v3q13-3 11-13Q18-1 4 7z" fill="#74a8d0" stroke="#5484a8" />,
  <><circle cx="12" cy="12" r="9" fill="none" stroke="#a0a0a0" strokeWidth="4" strokeDasharray="3.500 3.568" /><circle cx="12" cy="12" r="7" fill="#e0e0e0" stroke="#a4a4a4" strokeWidth="1.500" /><circle cx="12" cy="12" r="3.500" fill="#ccc" stroke="#999" /></>,
];

const handles = [0, 125, 249].flatMap((x) => [0, 52, 105].map((y) => [x, y])).filter(([x, y]) => !(x === 125 && y === 52));

export default function App() {
  return (
    <>
      <Global />
      <Screen>
        <TitleBar>
          <Icon n="impress" s={15} />
          <Title>Senza nome 1 - OpenOffice.org Impress</Title>
          <WindowButton aria-label="Riduci a icona"><MinMark /></WindowButton>
          <WindowButton aria-label="Ripristina"><svg width="12" height="12" viewBox="0 0 12 12"><path d="M4 4V1h7v6H8M1 5h7v6H1zM1 5.500h7" fill="none" stroke="#fff" strokeWidth="1.500" /></svg></WindowButton>
          <WindowButton $tone="red" aria-label="Chiudi"><Cross c="#fff" s={12} /></WindowButton>
        </TitleBar>
        <MenuBar>
          {menus.map(([a, b, c], i) => <MenuItem key={i}>{a}<u>{b}</u>{c}</MenuItem>)}
          <Spacer />
          <Icon n="download" s={16} />
          <Spacer as="i" hidden />
          <MenuItem aria-label="Chiudi documento"><Cross /></MenuItem>
        </MenuBar>
        <Toolbar $kind="main">
          <Grip /><Tools items={mainItems} />
          <Spacer />
          <Grip />
          <NamedTool><Icon n="page" s={15} />Pagina</NamedTool>
          <NamedTool><Icon n="design" s={14} />Struttura diapositiva</NamedTool>
          <Spacer /><Spacer /><Spacer /><Spacer />
          <ToolEnd>»<More aria-label="Altri"><Tri /></More></ToolEnd>
        </Toolbar>
        <Toolbar $kind="line">
          <Grip /><Tools items={["styles", "|", "nib", "ends", "v"]} />
          <Field $w={73}><LineSample /><select aria-label="Stile linea"><option></option></select><FieldArrow><Chevron /></FieldArrow></Field>
          <Field $w={60}><input aria-label="Spessore linea" defaultValue="0,00cm" /><FieldArrow><svg width="7" height="10" viewBox="0 0 7 10"><path d="M0 4l3.500-4L7 4zM0 6l3.500 4L7 6z" fill="#34487c" /></svg></FieldArrow></Field>
          <Field $w={81}><Swatch $c="#000" /><select aria-label="Colore linea"><option>Nero</option></select><FieldArrow><Chevron /></FieldArrow></Field>
          <Rule /><Tools items={["bucket"]} />
          <Field $w={69}><select aria-label="Riempimento"><option>Colore</option></select><FieldArrow><Chevron /></FieldArrow></Field>
          <Field $w={103} $gap={1}><Swatch $c="#9fb8f4" /><select aria-label="Colore di riempimento"><option>Blu 8</option></select><FieldArrow><Chevron /></FieldArrow></Field>
          <Rule /><Rule /><Tools items={["shadow"]} /><Rule /><More aria-label="Altri"><Tri /></More>
        </Toolbar>

        <Work>
          <SlidesPane>
            <PaneHead><h2>Diapositive</h2><button aria-label="Chiudi diapositive"><Cross /></button></PaneHead>
            <SlideList>
              <ThumbRow>
                <span />
                <Thumb>
                  <svg width="148" height="111" viewBox="0 0 148 111">
                    <path d="M46.500 15.500h71v18h-71z" fill="#9fc0fd" stroke="#333" />
                    <text x="82" y="26" textAnchor="middle" fontSize="5" fill="#234" fontFamily={sans} fontStyle="italic">Mappa concettuale</text>
                    <ellipse cx="79" cy="82" rx="35.500" ry="15" fill="#9fc0fd" stroke="#333" />
                  </svg>
                </Thumb>
              </ThumbRow>
              <ThumbName>Pagina 1</ThumbName>
            </SlideList>
          </SlidesPane>
          <Splitter><span /></Splitter>
          <Editor>
            <Tabs>
              <Tab $active>Normale</Tab><Tab>Struttura</Tab><Tab>Note</Tab><Tab>Stampati</Tab><Tab>Ordine diapositive</Tab>
            </Tabs>
            <Stage>
              <Desk>
                <Slide>
                  <Concept>Mappa concettuale</Concept>
                  <Oval width="258" height="114" viewBox="-4 -4 258 114">
                    <ellipse cx="125" cy="52.500" rx="124.500" ry="52.500" fill="#9fc0fd" stroke="#222" />
                    {handles.map(([x, y]) => <rect key={`${x}-${y}`} x={x - 2.5} y={y - 2.5} width="5" height="5" fill="#20e020" stroke="#104810" />)}
                  </Oval>
                </Slide>
              </Desk>
              <Scroll><ScrollGap $n={108} /><ScrollThumb $n={282}><i /></ScrollThumb><ScrollGap $n={88} /><ScrollButton aria-label="Giù"><Chevron /></ScrollButton></Scroll>
              <Scroll $across><ScrollButton aria-label="Sinistra"><Chevron d="left" /></ScrollButton><ScrollGap $n={174} /><ScrollThumb $across $n={182}><i /></ScrollThumb><ScrollGap $n={174} /><ScrollButton aria-label="Destra"><Chevron d="right" /></ScrollButton></Scroll>
            </Stage>
          </Editor>
          <Splitter><span /></Splitter>
          <TaskPane>
            <PaneHead><Spacer /><MenuItem>Visualizza</MenuItem><Drop aria-label="Opzioni"><Tri /></Drop><button aria-label="Chiudi attività"><Cross /></button></PaneHead>
            <Sections>
              <Section aria-label="Pagine master" />
              <Section aria-label="Layout" />
              <LayoutArea>
                <LayoutGrid>
                  {previews.map((p, i) => (
                    <LayoutOption key={i} $on={i === 0} aria-label={`Layout ${i + 1}`}>
                      <svg width="58" height="45" viewBox="0 0 58 45">
                        <defs><linearGradient id={`g${i}`} x1="0" y1="0" x2="0" y2="1"><stop offset=".4" stopColor="#dedede" /><stop offset=".46" stopColor="#e6fafc" /><stop offset=".75" stopColor="#fdfdfd" /></linearGradient></defs>
                        <rect x=".5" y=".5" width="57" height="44" fill={i < 6 ? `url(#g${i})` : "#e4e4e4"} stroke="#8c8c8c" />
                        <path d="M57.500 1v43.500H1" fill="none" stroke="#666" />
                        {p}
                      </svg>
                    </LayoutOption>
                  ))}
                </LayoutGrid>
                <Scroll><ScrollButton aria-label="Su"><Chevron d="up" /></ScrollButton><ScrollThumb $n={206}><i /></ScrollThumb><ScrollGap $n={153} /><ScrollButton aria-label="Giù"><Chevron /></ScrollButton></Scroll>
              </LayoutArea>
              {["Struttura tavole", "Animazione personalizzata", "Cambio diapositiva"].map((t) => (
                <Section key={t}><svg width="6" height="9" viewBox="0 0 6 9"><path d="M1 1l4 3.500L1 8z" fill="#b8d0f0" stroke="#44648c" /></svg>{t}</Section>
              ))}
            </Sections>
          </TaskPane>
        </Work>

        <Toolbar $kind="draw"><Grip /><Tools items={drawItems} /><Rule /><More aria-label="Altri"><Tri /></More></Toolbar>

        <Status>
          <Cell>Ellisse selezionato</Cell>
          <Cell $w={202}>
            <Position><svg width="13" height="10" viewBox="0 0 13 10"><path d="M0 2.500h4M3.500 0v8M5 4.500h7v5" fill="none" stroke="#555" strokeDasharray="2 1" /></svg>8,50 / 12,50</Position>
            <Position><svg width="13" height="10" viewBox="0 0 13 10"><path d="M1.500 1v8M5 9V2h7v7" fill="none" stroke="#555" strokeDasharray="2 1" /></svg>13,00 x 5,50</Position>
          </Cell>
          <Cell $w={21} $center>*</Cell>
          <Cell $w={23} />
          <Cell $w={124}>Pagina 1 / 1</Cell>
          <Cell $w={128}>Predefinito</Cell>
          <Cell $w={130}>
            <svg width="11" height="11" viewBox="0 0 11 11"><circle cx="5.500" cy="5.500" r="4.500" fill="#dcecf8" stroke="#4c6c8c" /><path d="M3 5.500h5" stroke="#234" /></svg>
            <Zoom type="range" aria-label="Zoom" min="0" max="100" defaultValue="24" />
            <svg width="11" height="11" viewBox="0 0 11 11"><circle cx="5.500" cy="5.500" r="4.500" fill="#dcecf8" stroke="#4c6c8c" /><path d="M3 5.500h5M5.500 3v5" stroke="#234" /></svg>
          </Cell>
          <Cell $w={42} $center>54%</Cell>
        </Status>

        <Taskbar>
          <Start><Icon n="flag" s={17} />start</Start>
          <Quick><Icon n="ie" s={15} /><Icon n="desktop" s={15} /><Icon n="fox" s={16} />»</Quick>
          <Task><Icon n="folder" s={15} />CArtellaTutorial</Task>
          <Task><Icon n="recorder" s={15} />Registrazione in cors...</Task>
          <Task $active><Icon n="impress" s={15} />Senza nome 1 - Open...</Task>
          <Spacer />
          <Tray><Icon n="trayBack" s={17} /><Icon n="recorder" s={15} />12.24</Tray>
        </Taskbar>

        <Palette>
          {pens.map((p, i) => (
            <React.Fragment key={i}>
              {i === 9 && <PaletteRule />}
              <PaletteTool aria-label={`Strumento ${i + 1}`}><svg width="22" height="22" viewBox="0 0 24 24">{p}</svg></PaletteTool>
            </React.Fragment>
          ))}
        </Palette>
        <PaletteHandle aria-label="Comprimi">
          <svg width="15" height="36" viewBox="0 0 15 36"><path d="M6 1v10L1 6zM13 1v10L8 6z" fill="#555" /><path d="M1 18.500h14M1 23.500h14M1 28.500h14M1 33.500h14" stroke="#666" strokeWidth="3" strokeDasharray="3 2" /></svg>
        </PaletteHandle>

        <Recorder>
          <RecTitle>
            <Icon n="recorder" s={15} /><h2>Registrazione in...</h2>
            <WindowButton aria-label="Riduci registratore"><MinMark /></WindowButton>
            <WindowButton $tone="dim" aria-label="Ingrandisci registratore" />
            <WindowButton $tone="pale" aria-label="Chiudi registratore"><Cross c="#fff" s={12} /></WindowButton>
          </RecTitle>
          <RecInfo><RecMenu>Menu<Tri c="#444" /></RecMenu><RecStats>0:01:04<i />8.0 fps</RecStats></RecInfo>
          <RecButtons>
            <RecButton $w={50} aria-label="Registra"><svg width="24" height="24" viewBox="0 0 24 24"><circle cx="12" cy="12" r="11.500" fill="#686868" stroke="#444" strokeWidth=".7" /></svg></RecButton>
            <RecButton $w={16} $gap={1} aria-label="Opzioni di registrazione"><Tri c="#333" /></RecButton>
            <RecButton $w={53} $gap={8} aria-label="Pausa"><svg width="14" height="20" viewBox="0 0 14 20"><path d="M1 1h4v18H1zM9 1h4v18H9z" fill="#4c8cd8" stroke="#1c3c70" /></svg></RecButton>
            <RecButton $w={53} $gap={10} aria-label="Ferma"><svg width="16" height="16" viewBox="0 0 16 16"><path d="M1 1h14v14H1z" fill="#3ca0f4" stroke="#1c4c80" /><path d="M2 2h12L2 11z" fill="#88ccfc" /></svg></RecButton>
          </RecButtons>
        </Recorder>

        <Pointer width="13" height="20" viewBox="0 0 13 20"><path d="M1 1v15l3.500-3 2.500 6 2.500-1L7 12h5z" fill="#fff" stroke="#222" /></Pointer>
      </Screen>
    </>
  );
}
